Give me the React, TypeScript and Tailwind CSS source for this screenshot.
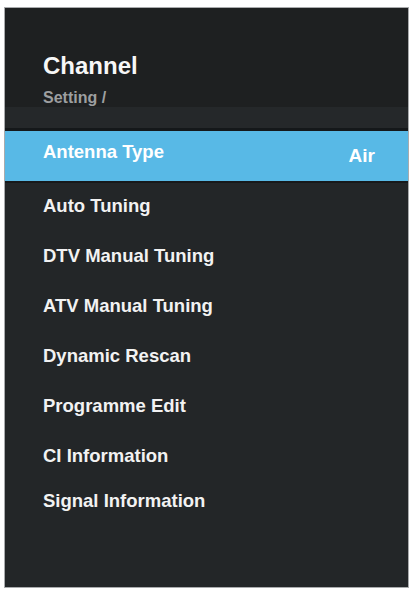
import React from "react";

const menuItems = [
  { label: "Auto Tuning", extra: "pb-[4px]" },
  { label: "DTV Manual Tuning", extra: "pb-[4px]" },
  { label: "ATV Manual Tuning", extra: "pb-[4px]" },
  { label: "Dynamic Rescan", extra: "pb-[4px]" },
  { label: "Programme Edit", extra: "pb-[4px]" },
  { label: "CI Information", extra: "pb-[4px]" },
  { label: "Signal Information", extra: "pb-[14px]" },
];

export default function App() {
  return (
    <div
      className="h-[592px] w-[412px] bg-white pt-[7px] pl-[4px] pr-[3px] pb-[4px]"
      style={{ fontFamily: '"Liberation Sans", Arial, sans-serif' }}
    >
      <div className="flex h-[581px] flex-col border border-[#a9abad] bg-[#232628]">
        {/* header */}
        <div className="bg-[#1e2021] pl-[38px] pt-[44px]">
          <h1 className="text-[24px] leading-[28px] font-bold text-[#f7f7f7]">
            Channel
          </h1>
          <p className="mt-[9px] text-[16px] leading-[18px] font-bold text-[#9d9fa0]">
            Setting /
          </p>
        </div>
        <div className="h-[21px] bg-[#25282a]" />
        <div className="h-[3px] bg-[#15181a]" />

        {/* selected row */}
        <div className="flex h-[50px] items-center justify-between bg-[#58b9e6] pl-[38px] pr-[33px]">
          <span className="mb-[8px] text-[18.5px] leading-[22px] font-bold text-white">
            Antenna Type
          </span>
          <span className="text-[19px] leading-[22px] font-bold text-white">
            Air
          </span>
        </div>
        <div className="h-[2px] bg-[#17191b]" />

        {/* menu */}
        <ul className="flex flex-1 flex-col">
          {menuItems.map((item) => (
            <li
              key={item.label}
              className={`flex h-[50px] items-center pl-[38px] text-[18.5px] leading-[22px] font-bold text-[#f2f2f2] ${item.extra}`}
            >
              {item.label}
            </li>
          ))}
        </ul>
      </div>
    </div>
  );
}
